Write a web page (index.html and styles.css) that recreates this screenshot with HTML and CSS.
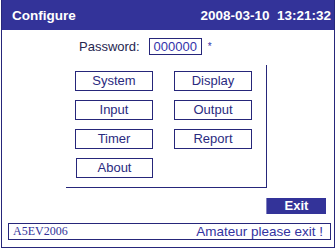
FILE: index.html
```html
<!DOCTYPE html>
<html lang="en">
<head>
  <meta charset="UTF-8" />
  <title>Configure</title>
  <link rel="stylesheet" href="styles.css">
</head>
<body>
  <div class="screen">
    <div class="title-bar">
      <span>Configure</span>
      <span>2008-03-10&nbsp;&nbsp;13:21:32</span>
    </div>

    <div class="pass-row">
      <span class="pass-label">Password:</span>
      <span class="pass-box">000000</span>
      <span class="star">*</span>
    </div>

    <div class="menu">
      <div class="btn">System</div>
      <div class="btn">Display</div>
      <div class="btn">Input</div>
      <div class="btn">Output</div>
      <div class="btn">Timer</div>
      <div class="btn">Report</div>
      <div class="btn about">About</div>
    </div>

    <div class="exit-row">
      <div class="exit-btn">Exit</div>
    </div>

    <div class="status">
      <span class="code">A5EV2006</span>
      <span class="msg">Amateur please exit !</span>
    </div>
  </div>
</body>
</html>
```

FILE: styles.css
```css
body {
  margin: 0;
  background: #fff;
  font-family: "Liberation Sans", Arial, sans-serif;
  font-size: 13px;
}
.screen {
  box-sizing: border-box;
  width: 334px;
  height: 248px;
  margin-left: 1px;
  border: 1px solid #26267a;
  border-top: none;
}
.title-bar {
  height: 30px;
  background-color: #333399;
  color: #fff;
  font-weight: bold;
  font-size: 13.5px;
  display: flex;
  justify-content: space-between;
  align-items: center;
  padding: 0 3px 0 10px;
}
.pass-row {
  display: flex;
  align-items: center;
  height: 17px;
  margin: 8px 0 0 77px;
  color: #262650;
}
.pass-box {
  box-sizing: border-box;
  height: 17px;
  width: 53px;
  margin-left: 9px;
  border: 1px solid #26267a;
  color: #3333aa;
  text-align: center;
  line-height: 15px;
}
.star {
  margin-left: 6px;
  font-size: 10px;
  color: #3333aa;
}
.menu {
  box-sizing: border-box;
  width: 201px;
  margin: 10px 0 0 64px;
  padding: 6px 13px 9px 9px;
  border-right: 1px solid #26267a;
  border-bottom: 1px solid #26267a;
  display: grid;
  grid-template-columns: 78px 78px;
  column-gap: 21px;
  row-gap: 9px;
}
.btn {
  box-sizing: border-box;
  height: 20px;
  border: 1px solid #26267a;
  color: #2a2a80;
  text-align: center;
  line-height: 18px;
}
.about {
  margin-left: 1px;
}
.exit-row {
  display: flex;
  justify-content: flex-end;
  margin: 10px 8px 0 0;
}
.exit-btn {
  width: 60px;
  height: 16px;
  box-sizing: border-box;
  background-color: #333399;
  border-left: 1px solid #8080c0;
  color: #fff;
  font-weight: bold;
  text-align: center;
  line-height: 16px;
}
.status {
  box-sizing: border-box;
  height: 17px;
  margin: 9px 3px 0 6px;
  border: 1px solid #26267a;
  display: flex;
  justify-content: space-between;
  align-items: center;
  padding: 0 7px 0 4px;
}
.code {
  font-family: "Liberation Serif", "Times New Roman", serif;
  font-size: 12px;
  color: #33339a;
}
.msg {
  color: #3333a0;
  font-size: 13.5px;
}
```
